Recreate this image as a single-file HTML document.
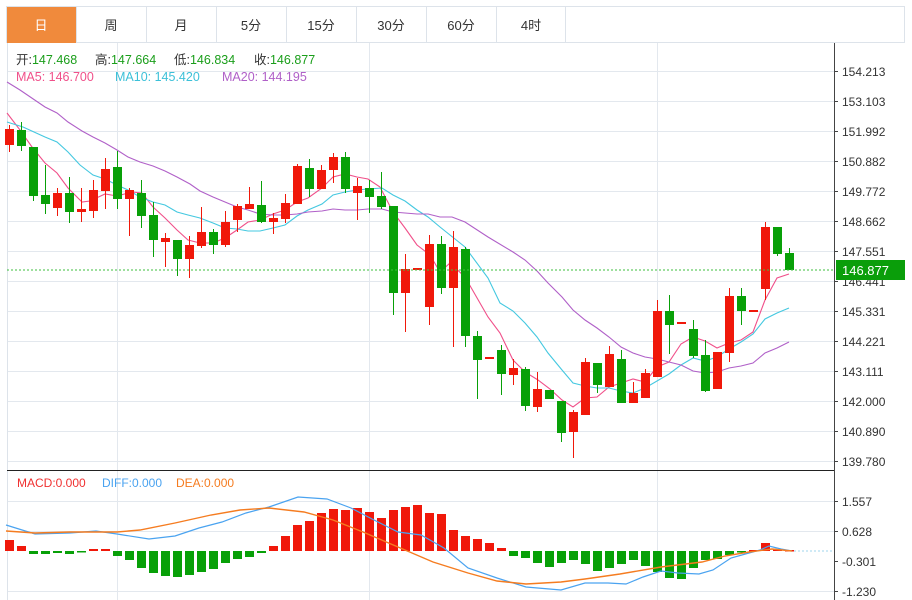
<!DOCTYPE html>
<html><head><meta charset="utf-8"><style>
html,body{margin:0;padding:0;background:#fff;width:912px;height:600px;overflow:hidden}
svg{display:block;font-family:"Liberation Sans","Noto Sans CJK SC",sans-serif}
</style></head><body>
<svg id="s" width="912" height="600" viewBox="0 0 912 600" xmlns="http://www.w3.org/2000/svg">
<rect x="0" y="0" width="912" height="600" fill="#fff"/>
<!-- tabs -->
<rect x="6.5" y="6.5" width="898" height="36" fill="#fff" stroke="#dde3ea"/>
<rect x="7" y="7" width="69" height="36" fill="#f08a3c"/>
<g stroke="#dde3ea"><line x1="146.5" y1="7" x2="146.5" y2="43"/><line x1="216.5" y1="7" x2="216.5" y2="43"/><line x1="286.5" y1="7" x2="286.5" y2="43"/><line x1="356.5" y1="7" x2="356.5" y2="43"/><line x1="426.5" y1="7" x2="426.5" y2="43"/><line x1="496.5" y1="7" x2="496.5" y2="43"/><line x1="565.5" y1="7" x2="565.5" y2="43"/><line x1="76.5" y1="7" x2="76.5" y2="43"/></g>
<g font-size="13" text-anchor="middle" fill="#333">
<text x="41" y="30" fill="#fff">日</text><text x="111" y="30">周</text><text x="181" y="30">月</text><text x="251" y="30">5分</text><text x="321" y="30">15分</text><text x="391" y="30">30分</text><text x="461" y="30">60分</text><text x="531" y="30">4时</text>
</g>
<g id="grid" stroke="#e3e8ee" stroke-width="1"></g>
<line x1="7.5" y1="43" x2="7.5" y2="600" stroke="#dde3ea"/>
<line x1="834.5" y1="43" x2="834.5" y2="600" stroke="#444"/>
<line x1="7" y1="470.5" x2="834" y2="470.5" stroke="#222"/>
<g id="ma" fill="none" stroke-width="1.1"></g>
<g id="cd"></g>
<line x1="7" y1="270" x2="834" y2="270" stroke="#3cbf3c" stroke-dasharray="2,2"/>
<g id="macd"></g>
<g font-size="12.5">
<text x="16" y="64" fill="#333">开:<tspan fill="#1a9e1a">147.468</tspan></text>
<text x="95" y="64" fill="#333">高:<tspan fill="#1a9e1a">147.664</tspan></text>
<text x="174" y="64" fill="#333">低:<tspan fill="#1a9e1a">146.834</tspan></text>
<text x="254" y="64" fill="#333">收:<tspan fill="#1a9e1a">146.877</tspan></text>
<text x="16" y="81" fill="#f0508a">MA5: 146.700</text>
<text x="115" y="81" fill="#3cc0d8">MA10: 145.420</text>
<text x="222" y="81" fill="#b060c8">MA20: 144.195</text>
</g>
<g font-size="12">
<text x="17" y="487" fill="#f03030">MACD:0.000</text>
<text x="102" y="487" fill="#4aa3f0">DIFF:0.000</text>
<text x="176" y="487" fill="#f57c20">DEA:0.000</text>
</g>
<g id="ax" font-size="12" fill="#333"></g>
<rect x="836" y="260" width="69" height="20" fill="#0a9e0a"/>
<text x="842" y="275" font-size="13" fill="#fff">146.877</text>
</svg>
<script>
var NS="http://www.w3.org/2000/svg";
function el(p,t,a){var e=document.createElementNS(NS,t);for(var k in a)e.setAttribute(k,a[k]);document.getElementById(p).appendChild(e);return e;}
// grid
for(var y=71;y<=461;y+=30)el("grid","line",{x1:7,y1:y+.5,x2:834,y2:y+.5});
[501,531,591].forEach(function(y){el("grid","line",{x1:7,y1:y+.5,x2:834,y2:y+.5});});
[117,369,657].forEach(function(x){el("grid","line",{x1:x+.5,y1:43,x2:x+.5,y2:600});});
var labs=["154.213","153.103","151.992","150.882","149.772","148.662","147.551","146.441","145.331","144.221","143.111","142.000","140.890","139.780"];
labs.forEach(function(l,i){var y=71+30*i;el("ax","line",{x1:834,y1:y+.5,x2:838,y2:y+.5,stroke:"#444"});el("ax","text",{x:842,y:y+5}).textContent=l;});
[["1.557",501],["0.628",531],["-0.301",561],["-1.230",591]].forEach(function(a){el("ax","line",{x1:834,y1:a[1]+.5,x2:838,y2:a[1]+.5,stroke:"#444"});el("ax","text",{x:842,y:a[1]+5}).textContent=a[0];});
// candles: [color, bodyTop, bodyBot, wickTop, wickBot]
var C=[["r",129,145,125,152],["g",130,146,122,151],["g",147,196,147,201],["g",195,204,165,214],["r",193,208,188,216],["g",193,212,177,223],["r",209,212,188,222],["r",190,211,180,218],["r",169,191,158,209],["g",167,199,151,209],["r",190,199,188,236],["g",193,216,180,228],["g",215,240,202,257],["r",238,242,233,267],["g",240,259,240,276],["r",245,259,236,278],["r",232,246,207,248],["g",232,245,229,254],["r",222,245,211,247],["r",206,220,204,232],["r",204,209,187,209],["g",205,222,181,223],["r",218,222,213,234],["r",203,219,194,223],["r",166,204,164,204],["g",168,189,159,197],["r",170,189,165,189],["r",157,170,153,183],["g",157,189,152,193],["r",186,193,178,220],["g",188,197,180,213],["g",196,207,172,209],["g",206,293,206,315],["r",269,293,254,332],["r",268,270,268,270],["r",244,307,235,325],["g",244,288,236,294],["r",247,288,231,347],["g",249,336,247,347],["g",336,360,331,399],["r",357,359,357,359],["g",350,374,345,395],["r",368,375,359,385],["g",369,406,367,411],["r",389,407,372,412],["g",390,399,390,399],["g",401,433,401,442],["r",412,432,410,458],["r",362,415,358,415],["g",363,385,363,393],["r",354,387,346,387],["g",359,403,350,403],["r",393,403,382,403],["r",373,398,369,398],["r",311,377,300,377],["g",311,325,295,354],["r",322,324,322,324],["g",329,356,320,358],["g",355,391,340,392],["r",352,389,352,389],["r",296,353,288,362],["g",296,311,288,325],["r",310,312,310,312],["r",227,289,222,300],["g",227,254,227,256],["g",253,270,248,270]];
var RC="#f0180a",GC="#08a008";
C.forEach(function(c,i){var x=9+12*i,col=c[0]=="r"?RC:GC;
el("cd","line",{x1:x+.5,y1:c[3],x2:x+.5,y2:c[4],stroke:col});
el("cd","rect",{x:x-4,y:c[1],width:9,height:Math.max(1.5,c[2]-c[1]),fill:col});});
function pl(g,pts,col,w){el(g,"polyline",{points:pts.map(function(p){return p.join(",");}).join(" "),stroke:col,fill:"none","stroke-width":w||1.1});}
pl("ma",[[7,113],[20,130],[32,147],[45,163],[57,173],[68,188],[82,202],[90,201],[105,194],[117,196],[132,192],[142,193],[153,207],[165,218],[177,230],[188,240],[200,243],[213,243],[225,238],[237,230],[248,222],[260,220],[273,214],[285,210],[297,202],[308,198],[322,188],[333,177],[345,174],[357,177],[368,179],[380,187],[393,212],[405,228],[417,245],[430,255],[440,272],[450,263],[465,277],[488,317],[500,333],[513,360],[525,372],[538,380],[550,389],[562,400],[573,407],[585,398],[597,397],[609,387],[621,383],[633,379],[645,382],[657,367],[669,362],[681,344],[693,337],[705,341],[717,348],[729,343],[741,340],[753,332],[765,300],[777,278],[789,274]],"#f0508a");
pl("ma",[[7,122],[23,127],[45,137],[57,142],[68,152],[80,165],[93,175],[105,179],[117,185],[128,190],[140,197],[153,202],[165,205],[177,212],[188,215],[200,218],[213,223],[225,228],[237,229],[248,231],[260,231],[273,228],[285,225],[297,216],[308,210],[322,204],[333,195],[345,192],[357,190],[368,189],[382,188],[393,195],[405,201],[417,210],[428,217],[440,227],[450,235],[465,247],[488,278],[500,303],[513,311],[525,323],[537,337],[548,353],[562,370],[573,383],[585,386],[597,388],[609,388],[621,391],[633,393],[645,388],[657,381],[669,374],[681,365],[693,358],[705,361],[717,357],[729,349],[741,342],[753,334],[765,319],[777,313],[789,308]],"#44c8e0");
pl("ma",[[7,82],[20,90],[45,107],[57,113],[68,122],[82,131],[93,137],[105,143],[117,150],[128,157],[140,162],[153,166],[165,171],[177,177],[190,184],[200,191],[213,197],[225,202],[237,207],[248,210],[260,214],[273,215],[285,215],[297,214],[308,212],[322,211],[333,209],[345,210],[357,210],[368,209],[382,209],[393,212],[405,213],[417,214],[428,214],[440,217],[452,217],[465,222],[488,237],[513,252],[525,260],[537,271],[548,283],[562,297],[573,310],[585,320],[597,328],[609,337],[621,347],[633,353],[645,357],[657,359],[669,362],[681,365],[693,371],[705,373],[717,372],[729,368],[741,366],[753,363],[765,353],[777,348],[789,342]],"#b060c8");
// MACD bars
var M=[540,546,554,554,553,554,552,549,549,556,560,568,573,576,577,575,572,569,563,559,557,553,546,536,525,521,513,509,510,508,512,518,510,507,505,513,514,530,536,539,543,548,556,558,563,567,563,560,564,571,568,564,560,566,572,578,579,568,560,559,555,552,550,543,549,550];
M.forEach(function(v,i){var x=9+12*i,col=v<551?RC:GC;var t=Math.min(v,551),h=Math.max(1.5,Math.abs(v-551));
el("macd","rect",{x:x-4,y:t,width:9,height:h,fill:col});});
el("macd","line",{x1:790,y1:551,x2:834,y2:551,stroke:"#9fd4ec","stroke-dasharray":"2,2"});
pl("macd",[[6,525],[35,534],[70,533],[96,531],[117,534],[149,539],[175,536],[199,528],[222,522],[246,513],[269,507],[298,497],[327,499],[351,508],[374,520],[398,532],[421,535],[444,548],[468,568],[497,578],[526,587],[561,590],[585,583],[608,583],[626,584],[643,577],[661,571],[678,573],[699,574],[713,570],[731,558],[749,553],[760,550],[769,546],[781,549],[792,551]],"#4aa3f0",1.2);
pl("macd",[[6,531],[35,533],[70,532],[117,532],[140,530],[175,523],[211,515],[240,510],[269,508],[304,512],[333,520],[363,532],[398,547],[433,562],[468,573],[497,581],[526,584],[561,582],[585,579],[620,574],[661,567],[702,562],[725,556],[749,552],[772,549],[792,551]],"#f57c20",1.4);
</script>
</body></html>
